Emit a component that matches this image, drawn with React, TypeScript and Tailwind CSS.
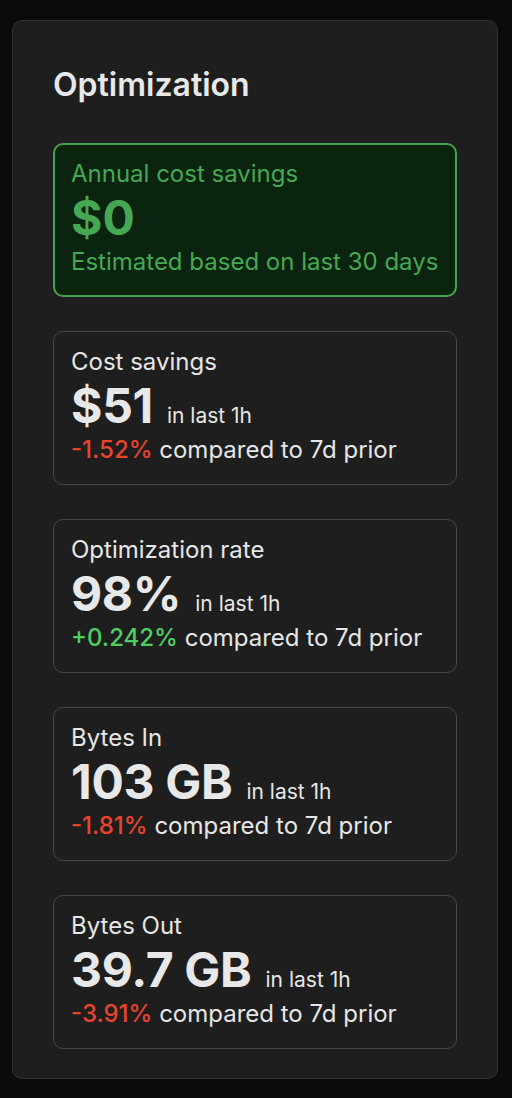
const stats = [
  { label: "Cost savings", value: "$51", delta: "-1.52%", up: false },
  { label: "Optimization rate", value: "98%", delta: "+0.242%", up: true },
  { label: "Bytes In", value: "103 GB", delta: "-1.81%", up: false },
  { label: "Bytes Out", value: "39.7 GB", delta: "-3.91%", up: false },
];

const StatCard = ({ label, value, delta, up }: (typeof stats)[number]) => {
  return (
    <div className="h-[154px] rounded-[10px] border border-[#474747] px-[17px] pt-[16px]">
      <div className="text-[24px] leading-[28px] text-[#e6e6e6]">{label}</div>
      <div className="flex h-[60px] items-baseline gap-[14px] leading-[60px]">
        <span className="text-[48px] font-bold tracking-[-0.3px] text-[#e8e8e8]">{value}</span>
        <span className="text-[21px] leading-[28px] text-[#e6e6e6]">in last 1h</span>
      </div>
      <div className="text-[24px] leading-[28px] text-[#e6e6e6]">
        <span className={up ? "font-medium text-[#4fcf63]" : "font-medium text-[#e8432d]"}>{delta}</span> compared to 7d prior
      </div>
    </div>
  );
};

export default function App() {
  return (
    <div className="min-h-screen bg-[#0b0b0b] pt-[20px] pl-[12px] font-['Inter',sans-serif]">
      <div className="w-[486px] rounded-[10px] border border-[#323232] bg-[#1e1e1e] px-[40px] pt-[44px] pb-[29px]">
        <h2 className="text-[32px] leading-[40px] font-semibold text-[#e8e8e8]">Optimization</h2>

        <div className="mt-[38px] flex flex-col gap-[34px]">
          <div className="h-[154px] rounded-[10px] border-2 border-[#43a34f] bg-[#0b2410] px-[16px] pt-[15px] text-[#46a853]">
            <div className="text-[24px] leading-[28px]">Annual cost savings</div>
            <div className="text-[48px] font-bold leading-[60px]">$0</div>
            <div className="text-[24px] leading-[28px]">Estimated based on last 30 days</div>
          </div>

          {stats.map((s) => (
            <StatCard key={s.label} {...s} />
          ))}
        </div>
      </div>
    </div>
  );
}
